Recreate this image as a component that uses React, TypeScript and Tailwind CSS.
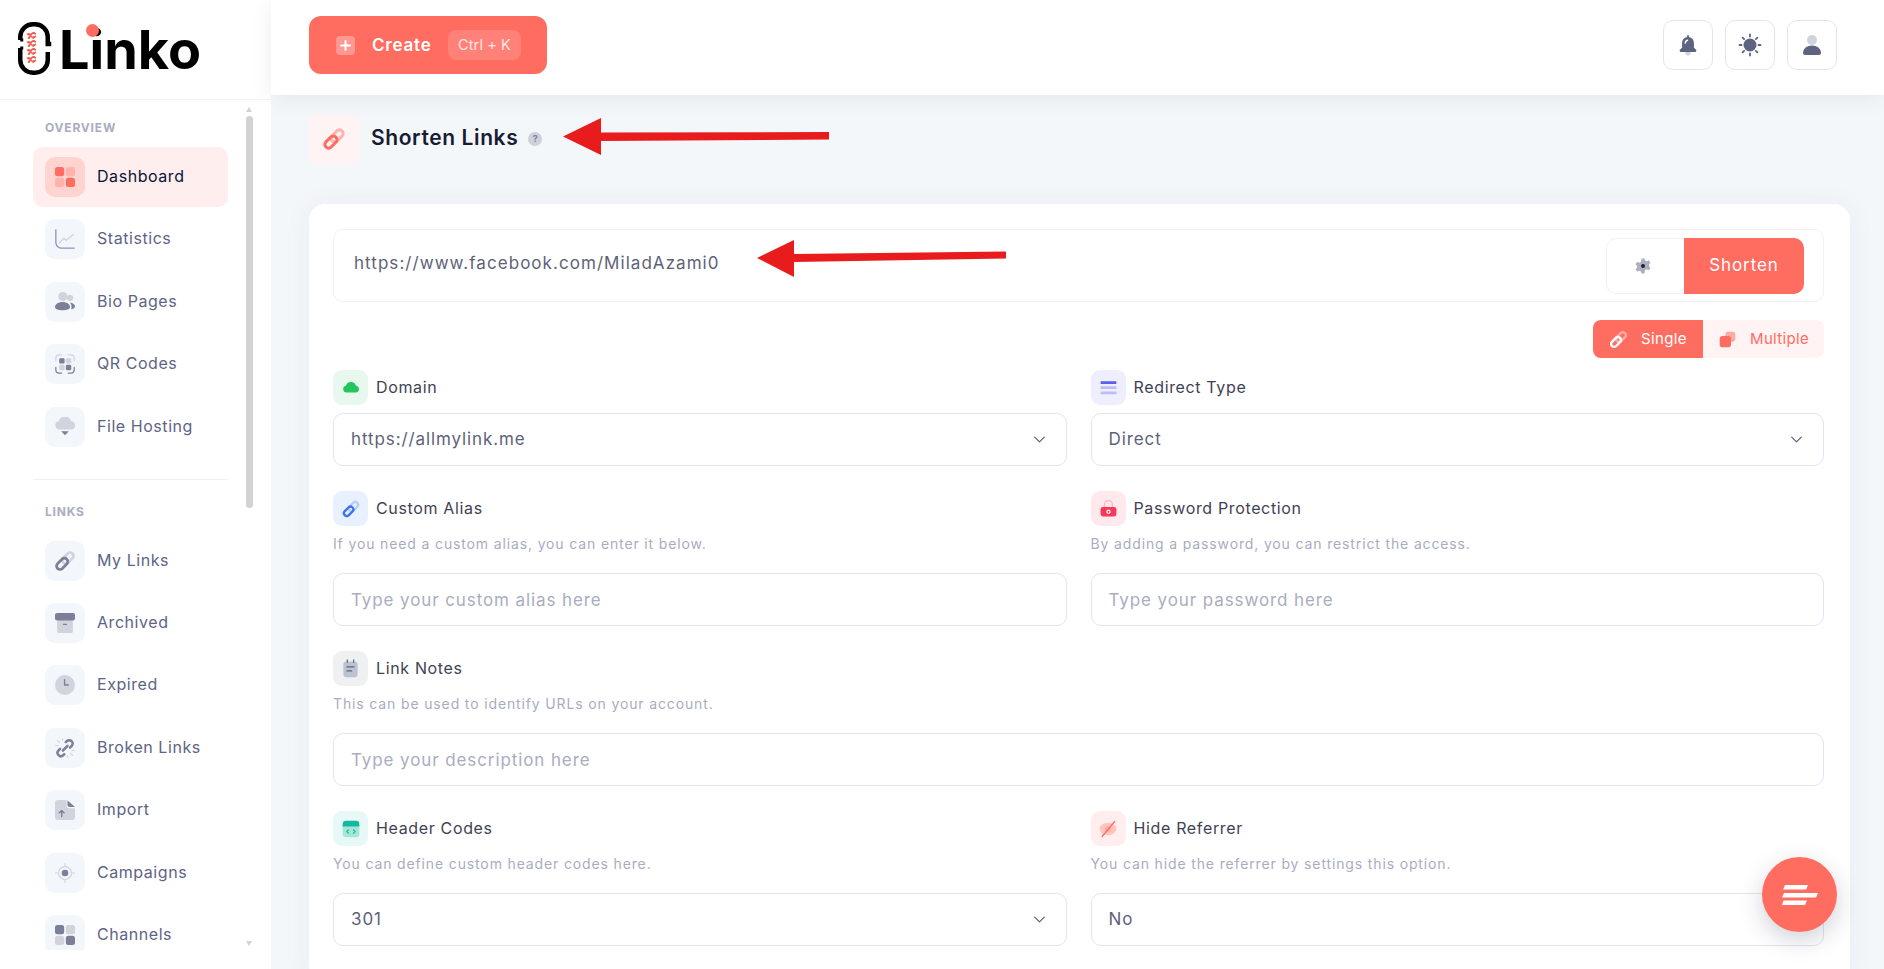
import { ChevronDown } from "lucide-react";
import type { ReactNode } from "react";

const D = "#7c7f98";
const L = "#d1d3dd";

function Svg({ size = 20, children }: { size?: number; children: ReactNode }) {
  return (
    <svg width={size} height={size} viewBox="0 0 24 24" fill="none">
      {children}
    </svg>
  );
}

function LinkIcon({ dark = D, light = L, size = 24 }: { dark?: string; light?: string; size?: number }) {
  return (
    <Svg size={size}>
      <g transform="rotate(-45 12 12)">
        <rect x="9.5" y="8.6" width="13" height="6.8" rx="3.4" stroke={light} strokeWidth="2.8" />
        <rect x="1.5" y="8.6" width="13" height="6.8" rx="3.4" stroke={dark} strokeWidth="2.8" />
      </g>
    </Svg>
  );
}

function Squares({ a, b }: { a: string; b: string }) {
  return (
    <Svg>
      <rect x="0" y="0" width="11" height="11" rx="3" fill={a} />
      <rect x="13" y="0" width="11" height="11" rx="3" fill={b} />
      <rect x="0" y="13" width="11" height="11" rx="3" fill={b} />
      <rect x="13" y="13" width="11" height="11" rx="3" fill={a} />
    </Svg>
  );
}

const overview = [
  { name: "Dashboard", active: true, icon: <Squares a="#ff6c60" b="#ffb3ac" /> },
  {
    name: "Statistics",
    icon: (
      <Svg>
        <path d="M1 1v15a7 7 0 0 0 7 7h15" stroke="#8d97ba" strokeWidth="1.6" strokeLinecap="round" />
        <path d="M5.500 16.500l5-5.500 3 2.500 8.500-7" stroke={L} strokeWidth="1.6" strokeLinecap="round" strokeLinejoin="round" />
      </Svg>
    ),
  },
  {
    name: "Bio Pages",
    icon: (
      <Svg>
        <circle cx="18" cy="7" r="3.800" fill={L} />
        <circle cx="9.500" cy="5.500" r="5.500" fill={L} />
        <path d="M18 12.500c3.500.5 6 2.600 6 4.600 0 2-2 3.300-4.700 3.700 1.100-3 .6-6-1.300-8.300z" fill={D} />
        <path d="M0 18c0-3.400 3.800-6 9-6s9 2.600 9 6c0 2.500-3.800 4-9 4s-9-1.500-9-4z" fill={D} />
      </Svg>
    ),
  },
  {
    name: "QR Codes",
    icon: (
      <Svg>
        <path d="M1 8V5a4 4 0 0 1 4-4h3M16 1h3a4 4 0 0 1 4 4v3" stroke={L} strokeWidth="1.500" strokeLinecap="round" />
        <path d="M1 16v3a4 4 0 0 0 4 4h3M16 23h3a4 4 0 0 0 4-4v-3" stroke={D} strokeWidth="1.500" strokeLinecap="round" />
        <rect x="5" y="5" width="6.500" height="6.500" rx="1.500" fill={D} />
        <rect x="13" y="5" width="6.500" height="6.500" rx="1.500" fill={L} />
        <rect x="5" y="13" width="6.500" height="6.500" rx="1.500" fill={L} />
        <rect x="13" y="13" width="6.500" height="6.500" rx="1.500" fill={D} />
      </Svg>
    ),
  },
  {
    name: "File Hosting",
    icon: (
      <Svg>
        <path d="M5 15a5 5 0 0 1-.6-9.900 8 8 0 0 1 15.200-.1A5 5 0 0 1 19 15z" fill={L} />
        <path d="M7.500 17h9l-3.600 4a1.200 1.200 0 0 1-1.800 0z" fill={D} />
      </Svg>
    ),
  },
];

const links = [
  { name: "My Links", icon: <LinkIcon /> },
  {
    name: "Archived",
    icon: (
      <Svg>
        <rect x="2.500" y="8" width="19" height="16" rx="2" fill={L} />
        <rect x="0" y="0" width="24" height="9" rx="2.500" fill={D} />
        <rect x="9.500" y="13" width="5" height="1.500" rx="0.700" fill={D} />
      </Svg>
    ),
  },
  {
    name: "Expired",
    icon: (
      <Svg>
        <circle cx="12" cy="12" r="12" fill={L} />
        <path d="M11.500 5.500v6.500H16" stroke={D} strokeWidth="1.600" strokeLinecap="round" strokeLinejoin="round" />
      </Svg>
    ),
  },
  {
    name: "Broken Links",
    icon: (
      <Svg>
        <path d="M13 5l1.200-1.200a4 4 0 0 1 5.800 5.600L18 11.500M11 19.500l-1.200 1.200a4 4 0 0 1-5.700-5.600L6 13" stroke={D} strokeWidth="3" strokeLinecap="round" />
        <path d="M15 9.500l-5.500 5.500" stroke={D} strokeWidth="3" strokeLinecap="round" />
        <path d="M3 3l2.500 2.500M9 1v2M1 9h2.500M21 21l-2.500-2.500M15 23v-2M23 15h-2.500" stroke={L} strokeWidth="1.400" strokeLinecap="round" />
      </Svg>
    ),
  },
  {
    name: "Import",
    icon: (
      <Svg>
        <path d="M4 0h9.500a2 2 0 0 1 .5 1.500V7a3 3 0 0 0 3 3h7v10a4 4 0 0 1-4 4H4a4 4 0 0 1-4-4V4a4 4 0 0 1 4-4z" fill={L} />
        <path d="M15 0.500V6a2.500 2.500 0 0 0 2.500 2.500H24z" fill={D} />
        <path d="M8 20v-7M5 15.500l3-3 3 3" stroke={D} strokeWidth="1.600" strokeLinecap="round" strokeLinejoin="round" />
      </Svg>
    ),
  },
  {
    name: "Campaigns",
    icon: (
      <Svg>
        <circle cx="12" cy="12" r="7.800" stroke={L} strokeWidth="1.500" />
        <circle cx="12" cy="12" r="4" fill={D} />
        <path d="M12 0v3.500M12 20.500V24M0 12h3.500M20.500 12H24" stroke={L} strokeWidth="1.300" strokeLinecap="round" />
      </Svg>
    ),
  },
  { name: "Channels", icon: <Squares a={D} b={L} /> },
];

function NavItem({ name, icon, active }: { name: string; icon: ReactNode; active?: boolean }) {
  return (
    <div className={`flex items-center h-[60px] mb-[2.4px] px-3 rounded-[10px] ${active ? "bg-[#ffeeed]" : ""}`}>
      <div className={`w-10 h-10 shrink-0 rounded-[10px] flex items-center justify-center ${active ? "bg-[#ffd3cf]" : "bg-[#f3f6fa]"}`}>
        {icon}
      </div>
      <span className={`ml-3 pb-[2px] text-[16px] tracking-[0.55px] ${active ? "text-[#071437]" : "text-[#5e6485]"}`}>{name}</span>
    </div>
  );
}

function Logo() {
  return (
    <div className="relative flex items-center h-full pl-[17px]">
      <svg width="35" height="55" viewBox="0 0 35 55" fill="none" className="mb-[3px]">
        <path d="M3.250 19V16A12.750 12.750 0 0 1 16 3.250h2A12.750 12.750 0 0 1 30.750 16V23h3.500" stroke="#000" strokeWidth="4.500" />
        <path d="M3.250 27V39A12.750 12.750 0 0 0 16 51.750h2A12.750 12.750 0 0 0 30.750 39V31" stroke="#000" strokeWidth="4.500" />
        <path d="M3.250 19h3M3.250 27h3" stroke="#000" strokeWidth="3" />
        <g stroke="#ee5e52" strokeWidth="1.600">
          {[13, 17, 21, 25, 29, 33, 37, 41].map((y, i) => (
            <path key={y} d={i % 2 ? `M11 ${y}l3-2 2 2 3-2` : `M10 ${y}l3 1 3-2 3 1`} />
          ))}
          <path d="M12 12v31M17 11v32" strokeDasharray="2 2" />
        </g>
      </svg>
      <span className="ml-[7px] text-[54px] leading-none font-bold text-black">Linko</span>
      <span className="absolute left-[86px] top-[24px] w-[13px] h-[13px] rounded-full bg-[#ff6c60]" />
    </div>
  );
}

function Sidebar() {
  return (
    <aside className="relative w-[271px] shrink-0 h-full bg-white">
      <div className="h-[100px] border-b border-[#f1f3f8]">
        <Logo />
      </div>
      <nav className="h-[850px] overflow-hidden pl-[33px] w-[228px]">
        <div className="pt-5 pl-3 mb-[11px] text-[12px] leading-4 font-bold tracking-[0.8px] text-[#a9adc0]">OVERVIEW</div>
        {overview.map((item) => (
          <NavItem key={item.name} {...item} />
        ))}
        <div className="mt-[22px] border-t border-[#eff0f3]" />
        <div className="pt-6 pl-3 mb-[11px] text-[12px] leading-4 font-bold tracking-[0.8px] text-[#a9adc0]">LINKS</div>
        {links.map((item) => (
          <NavItem key={item.name} {...item} />
        ))}
      </nav>
      {/* scrollbar */}
      <div className="absolute left-[246px] top-[116px] w-[7px] h-[392px] rounded-full bg-[#d3d3d3]" />
      <div className="absolute left-[246px] top-[107px] w-0 h-0 border-x-[3.5px] border-x-transparent border-b-[5px] border-b-[#d3d3d3]" />
      <div className="absolute left-[246px] top-[941px] w-0 h-0 border-x-[3.5px] border-x-transparent border-t-[5px] border-t-[#d3d3d3]" />
    </aside>
  );
}

function IconButton({ children }: { children: ReactNode }) {
  return (
    <div className="w-[50px] h-[50px] rounded-[10px] bg-white border border-[#e4e4ef] flex items-center justify-center">{children}</div>
  );
}

function Header() {
  const dark = "#5e6382";
  return (
    <header className="relative z-10 h-[95px] shrink-0 bg-white pb-[5px] pl-[38px] pr-[47px] flex items-center justify-between shadow-[0_4px_22px_rgba(20,30,60,0.07)]">
      <div className="w-[238px] h-[58px] rounded-[12px] bg-[#ff6c60] pl-[27px] flex items-center">
        <div className="w-[19px] h-[19px] rounded-[4px] bg-white/30 flex items-center justify-center">
          <svg width="11" height="11" viewBox="0 0 11 11">
            <path d="M5.500 1v9M1 5.500h9" stroke="#fff" strokeWidth="2" strokeLinecap="round" />
          </svg>
        </div>
        <span className="ml-[17px] w-[60px] pt-[1px] text-[17px] tracking-[0.8px] font-semibold text-white">Create</span>
        <span className="ml-4 w-[73px] h-[30px] rounded-[8px] bg-white/15 flex items-center justify-center text-[14.5px] tracking-[0.1px] text-white/80">
          Ctrl + K
        </span>
      </div>
      <div className="flex gap-3">
        <IconButton>
          <Svg size={22}>
            <circle cx="12" cy="20.500" r="3" fill={L} />
            <path d="M12 1c.6 0 1 .4 1 1v1.200c3.400.6 5.500 3.300 5.500 6.800v5l2.300 2.200c.8.800.3 2.300-1 2.300H4.200c-1.300 0-1.800-1.500-1-2.300L5.500 15v-5c0-3.500 2.100-6.200 5.500-6.800V2c0-.6.400-1 1-1z" fill={dark} />
            <path d="M9 10c0-1.500 1-2.800 2.500-3.200" stroke="#fff" strokeWidth="1.500" strokeLinecap="round" />
          </Svg>
        </IconButton>
        <IconButton>
          <Svg size={24}>
            <circle cx="12" cy="12" r="6.500" fill={dark} />
            <path d="M12 1.500v2M12 20.500v2M1.500 12h2M20.500 12h2M4.600 4.600l1.500 1.500M17.900 17.900l1.500 1.500M4.600 19.400l1.500-1.500M17.900 6.100l1.500-1.500" stroke={dark} strokeWidth="1.800" strokeLinecap="round" />
          </Svg>
        </IconButton>
        <IconButton>
          <Svg size={24}>
            <circle cx="12" cy="7" r="5" fill={L} />
            <path d="M3 20c0-4.500 4-7.500 9-7.500s9 3 9 7.500c0 1.200-1 2-2 2H5c-1 0-2-.8-2-2z" fill={dark} />
          </Svg>
        </IconButton>
      </div>
    </header>
  );
}

function Label({ icon, bg, text }: { icon: ReactNode; bg: string; text: string }) {
  return (
    <div className="flex items-center h-[35px]">
      <div className={`w-[35px] h-[35px] rounded-[9px] flex items-center justify-center ${bg}`}>{icon}</div>
      <span className="ml-2 pb-[2px] text-[16px] tracking-[0.65px] text-[#3f4254]">{text}</span>
    </div>
  );
}

function Hint({ children }: { children: ReactNode }) {
  return <p className="mt-[9px] mb-5 h-[18px] text-[14px] tracking-[0.86px] leading-[18px] text-[#a9adc0]">{children}</p>;
}

function Select({ value }: { value: string }) {
  return (
    <div className="h-[53px] px-[17px] rounded-[10px] border border-[#e4e4ef] bg-white flex items-center justify-between text-[17px] tracking-[0.9px] text-[#5e6278]">
      <span className="pt-[1px]">{value}</span>
      <ChevronDown className="w-[19px] h-[19px] text-[#5e6278]" strokeWidth={1.6} />
    </div>
  );
}

function TextBox({ placeholder }: { placeholder: string }) {
  return (
    <input
      placeholder={placeholder}
      className="block w-full h-[53px] px-[17px] rounded-[10px] border border-[#e4e4ef] bg-white text-[17px] tracking-[0.9px] outline-none placeholder:text-[#a9adc0]"
    />
  );
}

function ShortenForm() {
  return (
    <div className="mt-[40px] bg-white rounded-t-[16px] pl-6 pr-[26px] pt-[25px] pb-10 shadow-[0_0_30px_rgba(20,30,60,0.05)]">
      <div className="h-[73px] rounded-[10px] border border-[#f1f1f5] pl-[20px] pr-[19px] flex items-center justify-between">
        <span className="mb-[3px] text-[17px] tracking-[1.05px] text-[#5e6278]">https://www.facebook.com/MiladAzami0</span>
        <div className="flex h-[56px]">
          <div className="w-[78px] pr-[6px] rounded-l-[10px] border border-r-0 border-[#f1f1f5] flex items-center justify-center">
            <Svg size={18}>
              <path d="M10 2h4l.7 2.800 2.400 1 2.500-1.500 2.400 3.200-2 2.100v2.800l2 2.100-2.400 3.200-2.500-1.500-2.400 1L14 22h-4l-.7-2.800-2.400-1-2.500 1.500L2 16.500l2-2.100v-2.800L2 9.500l2.400-3.200 2.500 1.500 2.400-1z" fill="#aeb0bc" />
              <circle cx="12" cy="12" r="2.600" fill="#1a1f44" />
            </Svg>
          </div>
          <div className="w-[120px] pt-[1px] rounded-r-[10px] bg-[#ff6c60] flex items-center justify-center text-[17px] tracking-[0.9px] text-white">Shorten</div>
        </div>
      </div>

      <div className="mt-[18px] flex justify-end">
        <div className="w-[110px] h-[38px] rounded-l-[8px] bg-[#ff6c60] pl-[15px] flex items-center text-[15px] tracking-[0.35px] text-white">
          <LinkIcon dark="#fff" light="#ffaaa3" size={21} />
          <span className="ml-[12px]">Single</span>
        </div>
        <div className="w-[121px] h-[38px] rounded-r-[8px] bg-[#fff4f3] pl-[16px] flex items-center text-[15px] tracking-[0.35px] text-[#ff6c60]">
          <Svg size={17}>
            <rect x="9" y="1" width="14" height="14" rx="3.500" fill="#ffaaa3" />
            <rect x="1" y="7" width="16" height="16" rx="4" fill="#ff6c60" />
          </Svg>
          <span className="ml-[14px]">Multiple</span>
        </div>
      </div>

      <div className="mt-[12px] grid grid-cols-2 gap-x-6 gap-y-[25px]">
        <div>
          <Label
            bg="bg-[#e8f8ef]"
            text="Domain"
            icon={
              <Svg size={18}>
                <path d="M6 18a4.500 4.500 0 0 1-.8-8.900 7 7 0 0 1 13.500-.2A4.600 4.600 0 0 1 18.500 18z" fill="#22c55e" />
              </Svg>
            }
          />
          <div className="mt-2">
            <Select value="https://allmylink.me" />
          </div>
        </div>
        <div>
          <Label
            bg="bg-[#eeeefe]"
            text="Redirect Type"
            icon={
              <Svg size={19}>
                <rect x="2" y="4" width="20" height="3.500" rx="0.800" fill="#5b5fe8" />
                <rect x="2" y="10.500" width="20" height="3.500" rx="0.800" fill="#bcbdf6" />
                <rect x="2" y="17" width="20" height="3.500" rx="0.800" fill="#bcbdf6" />
              </Svg>
            }
          />
          <div className="mt-2">
            <Select value="Direct" />
          </div>
        </div>

        <div>
          <Label
            bg="bg-[#e9f0ff]"
            text="Custom Alias"
            icon={<LinkIcon dark="#3b72f6" light="#b7cdfb" size={20} />}
          />
          <Hint>If you need a custom alias, you can enter it below.</Hint>
          <TextBox placeholder="Type your custom alias here" />
        </div>
        <div>
          <Label
            bg="bg-[#ffe9ed]"
            text="Password Protection"
            icon={
              <Svg size={19}>
                <path d="M7 11V7a5 5 0 0 1 10 0v4" stroke="#ffb3c0" strokeWidth="1.600" />
                <rect x="2" y="10" width="20" height="12" rx="3" fill="#f8375d" />
                <circle cx="12" cy="16" r="2" stroke="#fff" strokeWidth="1.500" />
              </Svg>
            }
          />
          <Hint>By adding a password, you can restrict the access.</Hint>
          <TextBox placeholder="Type your password here" />
        </div>

        <div className="col-span-2">
          <Label
            bg="bg-[#eff0f2]"
            text="Link Notes"
            icon={
              <Svg size={19}>
                <rect x="3" y="3" width="18" height="20" rx="4" fill="#bcc3d0" />
                <path d="M8 1v3M16 1v3" stroke="#5e6278" strokeWidth="1.500" strokeLinecap="round" />
                <path d="M7.500 10h9M7.500 15h6" stroke="#5e6278" strokeWidth="1.400" strokeLinecap="round" />
              </Svg>
            }
          />
          <Hint>This can be used to identify URLs on your account.</Hint>
          <TextBox placeholder="Type your description here" />
        </div>

        <div>
          <Label
            bg="bg-[#e8f8f6]"
            text="Header Codes"
            icon={
              <Svg size={20}>
                <path d="M2 8h20v10a4 4 0 0 1-4 4H6a4 4 0 0 1-4-4z" fill="#a4e6da" />
                <path d="M6 2h12a4 4 0 0 1 4 4v3H2V6a4 4 0 0 1 4-4z" fill="#14b8a0" />
                <path d="M9 13l-2 2 2 2M15 13l2 2-2 2" stroke="#14b8a0" strokeWidth="1.500" strokeLinecap="round" strokeLinejoin="round" />
              </Svg>
            }
          />
          <Hint>You can define custom header codes here.</Hint>
          <Select value="301" />
        </div>
        <div>
          <Label
            bg="bg-[#ffeeed]"
            text="Hide Referrer"
            icon={
              <Svg size={20}>
                <ellipse cx="12" cy="12" rx="10" ry="7.500" fill="#ffc4bf" />
                <circle cx="12" cy="12" r="3.500" fill="#ffaaa3" />
                <path d="M20 3L5 21" stroke="#ff6c60" strokeWidth="1.500" strokeLinecap="round" />
              </Svg>
            }
          />
          <Hint>You can hide the referrer by settings this option.</Hint>
          <Select value="No" />
        </div>
      </div>
    </div>
  );
}

export default function App() {
  return (
    <div
      className="relative flex h-screen w-full overflow-hidden bg-[#f4f7fa]"
      style={{ fontFamily: "Inter, 'Noto Sans', sans-serif" }}
    >
      <Sidebar />
      <main className="flex-1 min-w-0 h-full flex flex-col">
        <Header />
        <div className="flex-1 min-h-0 pt-[19px] pl-[38px] pr-[34px]">
          <div className="flex items-center h-[50px]">
            <div className="w-[50px] h-[50px] rounded-[8px] bg-[#fff4f3] flex items-center justify-center">
              <LinkIcon dark="#ff6c60" light="#ffb3ac" size={26} />
            </div>
            <h1 className="ml-3 pb-[2px] text-[21px] tracking-[0.6px] font-semibold text-[#181c32]">Shorten Links</h1>
            <span className="ml-[10px] w-[14px] h-[14px] rounded-full bg-[#cfd0dc] flex items-center justify-center text-[9px] font-bold text-[#7c7f98]">?</span>
          </div>
          <ShortenForm />
        </div>
      </main>

      {/* annotation arrows */}
      <svg className="absolute left-0 top-0 pointer-events-none" width="1884" height="969" fill="#e81c1c">
        <polygon points="563,136.500 601,118 601,132.500 829,132 829,139.500 601,141 601,155" />
        <polygon points="757,258 794,240 794,254 1006,251.500 1006,258.500 794,262 794,277" />
      </svg>

      {/* floating menu button */}
      <div className="absolute left-[1762px] top-[857px] w-[75px] h-[75px] rounded-full bg-[#ff6c60] flex items-center justify-center shadow-[0_8px_24px_rgba(20,30,60,0.2)]">
        <svg width="36" height="20" viewBox="0 0 36 20" fill="#fff">
          <polygon points="3,0 26,0 24,4.500 1,4.500" />
          <polygon points="2,8 36,8 34,12.500 0,12.500" />
          <polygon points="1.500,15.500 25,15.500 23,20 0,20" />
        </svg>
      </div>
    </div>
  );
}
